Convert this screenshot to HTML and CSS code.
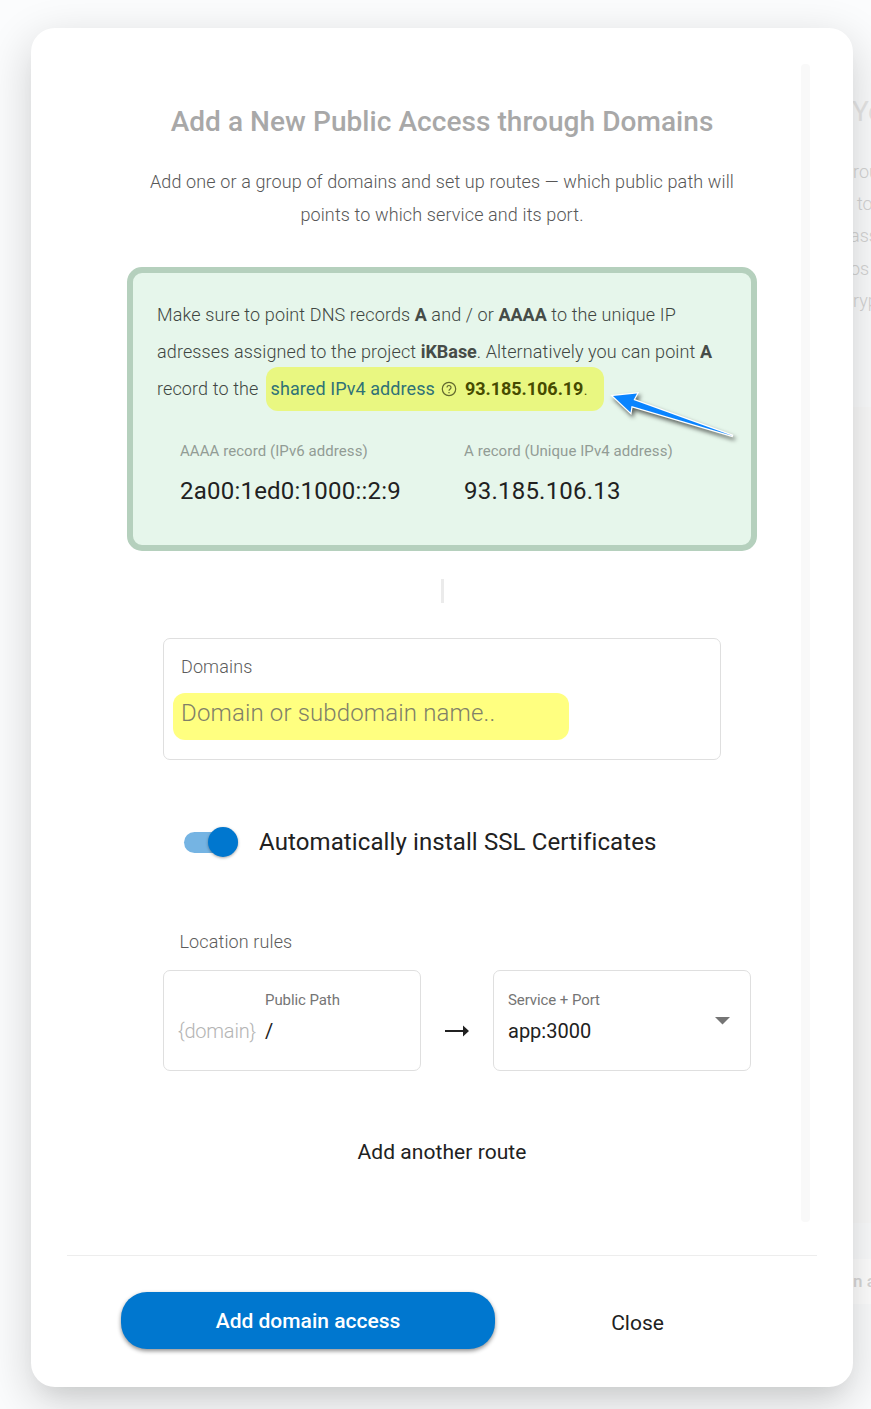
FILE: index.html
```html
<!DOCTYPE html>
<html lang="en">
<head>
<meta charset="utf-8">
<title>Public access through domains</title>
<link rel="stylesheet" href="styles.css">
</head>
<body>
<div class="page">
  <div class="behind">
    <div class="behind-card">
      <h2 class="behind-title">Yo</h2>
      <p class="behind-text"><span>rou</span><span class="in">to</span><span class="out">ass</span><span class="out">os</span><span>ryp</span></p>
    </div>
    <div class="behind-panel"></div>
    <div class="behind-button">n a</div>
  </div>

  <main class="dialog">
    <div class="scroll">
      <div class="content">
        <h1 class="title">Add a New Public Access through Domains</h1>
        <p class="intro">Add one or a group of domains and set up routes — which public path will<br>points to which service and its port.</p>

        <section class="notice">
          <p class="notice-text">
            <span class="line">Make sure to point DNS records <b>A</b> and / or <b>AAAA</b> to the unique IP</span>
            <span class="line">adresses assigned to the project <b>iKBase</b>. Alternatively you can point <b>A</b></span>
            <span class="line last">record to the <mark class="mark"><a class="link">shared IPv4 address</a><svg class="help" viewBox="0 0 16 16"><circle cx="8" cy="8" r="6.7"/><path d="M6 6.500a2 2 0 1 1 3.200 1.600C8.400 8.700 8 8.900 8 9.700M8 11v1.200"/></svg><b>93.185.106.19</b>.</mark></span>
          </p>
          <div class="records">
            <div><div class="rec-label">AAAA record (IPv6 address)</div><div class="rec-value">2a00:1ed0:1000::2:9</div></div>
            <div><div class="rec-label">A record (Unique IPv4 address)</div><div class="rec-value">93.185.106.13</div></div>
          </div>
          <svg class="pointer" viewBox="0 0 140 75"><path d="M8 20L32 17.500L28.500 24L128 60L26.500 30L25.500 36.500Z"/></svg>
        </section>

        <div class="tick"></div>

        <section class="domains">
          <div class="label">Domains</div>
          <div class="placeholder">Domain or subdomain name..</div>
        </section>

        <div class="ssl"><span class="toggle"><span class="thumb"></span></span><span class="ssl-text">Automatically install SSL Certificates</span></div>

        <div class="label rules">Location rules</div>
        <div class="route">
          <div class="field path">
            <span class="prefix">{domain}</span>
            <div><div class="small">Public Path</div><div class="value">/</div></div>
          </div>
          <svg class="arrow" viewBox="0 0 24 12"><path d="M0 5h18V0.500L24 6L18 11.500V7H0Z"/></svg>
          <div class="field service">
            <div><div class="small">Service + Port</div><div class="value">app:3000</div></div>
            <svg class="caret" viewBox="0 0 15 8"><path d="M0 0H15L7.500 7.500Z"/></svg>
          </div>
        </div>
        <div class="another">Add another route</div>
      </div>
      <div class="scrollbar"></div>
    </div>
    <footer class="footer">
      <button class="primary">Add domain access</button>
      <button class="close">Close</button>
    </footer>
  </main>
</div>
</body>
</html>
```
FILE: styles.css
```css
* { box-sizing: border-box; }
body { margin: 0; font-family: Roboto, "Liberation Sans", sans-serif; color: #212121; background: #fbfcfd; }
h1, h2, p { margin: 0; }
button { font: inherit; border: 0; padding: 0; background: none; }
.page { position: relative; width: 871px; height: 1409px; overflow: hidden; padding: 28px 18px 22px 31px; }

/* Content dimmed behind the dialog */
.behind { position: absolute; top: 0; right: 0; width: 18px; height: 1409px; overflow: hidden; white-space: nowrap; }
.behind-card { height: 407px; padding-top: 92px; }
.behind-title { font-size: 28px; line-height: 40px; font-weight: 400; color: #e6e6e6; margin-left: -1px; }
.behind-text { display: flex; flex-direction: column; padding-top: 24px; font-size: 18px; line-height: 32.2px; font-weight: 300; color: #d4d4d4; }
.behind-text .in { padding-left: 4px; }
.behind-text .out { margin-left: -3px; }
.behind-panel { height: 816px; background: #fafafa; }
.behind-button { height: 45px; margin-top: 36px; line-height: 45px; background: #fff; font-size: 17px; font-weight: 500; color: #d8d8d8; }

.dialog { position: relative; width: 822px; height: 1359px; padding: 36px; background: #fff; border-radius: 24px;
  box-shadow: 0 16px 22px -12px rgba(0,20,10,.08), 0 14px 46px 2px rgba(0,0,0,.165); }
.scroll { display: flex; height: 1191px; }
.content { width: 630px; margin-left: 60px; }
.scrollbar { width: 9px; height: 1158px; margin-left: 44px; border-radius: 4px; background: #f9f9f9; }

.title { padding-top: 38px; text-align: center; font-size: 28px; line-height: 40px; font-weight: 500; letter-spacing: .06px; color: #a8a8a8; white-space: nowrap; }
.intro { padding-top: 23px; height: 125px; text-align: center; font-size: 18px; line-height: 33px; font-weight: 300; letter-spacing: .12px; color: #575757; white-space: nowrap; }

.notice { position: relative; height: 284px; padding: 23px 24px; border: 6px solid #b5d0bd; border-radius: 15px; background: #e6f6eb; }
.notice-text { height: 145px; font-size: 18px; font-weight: 300; letter-spacing: .12px; line-height: 37px; color: #404642; white-space: nowrap; }
.notice-text b { font-weight: 700; letter-spacing: -.04px; color: #464c48; }
.line { display: block; height: 37px; }
.last { display: flex; align-items: center; }
.mark { display: flex; flex: none; align-items: center; width: 338px; height: 44px; margin-left: 7px; padding-left: 5px; border-radius: 12px; background: #e9f781; color: #464b00; }
.notice-text .mark b { color: #464b00; }
.link { color: #2f7277; font-weight: 400; letter-spacing: .08px; }
.help { width: 16px; height: 16px; margin: 0 8px 0 6px; fill: none; stroke: #62692f; stroke-width: 1.2; }
.records { display: grid; grid-template-columns: 284px auto; padding-left: 23px; white-space: nowrap; }
.rec-label { font-size: 15px; line-height: 20px; letter-spacing: .06px; color: #929c95; }
.rec-value { padding-top: 14px; font-size: 24px; line-height: 32px; letter-spacing: .22px; color: #212121; }
.pointer { position: absolute; left: 472px; top: 103px; width: 140px; height: 75px; overflow: visible; fill: #0a84ff; stroke: #fff; stroke-width: 2.5; paint-order: stroke; filter: drop-shadow(2px 3px 2px rgba(0,0,0,.6)); }

.tick { width: 3px; height: 24px; margin: 28px auto 35px; background: #ebebeb; }
.label { font-size: 18px; line-height: 24px; font-weight: 300; letter-spacing: .12px; color: #5c5c5c; }
.domains { width: 558px; height: 122px; margin-left: 36px; padding: 16px 9px; border: 1px solid #dfdfdf; border-radius: 7px; }
.domains .label { padding-left: 8px; }
.placeholder { width: 396px; height: 47px; margin-top: 14px; padding-left: 8px; border-radius: 12px; background: #ffff80; font-size: 24px; line-height: 40px; font-weight: 300; letter-spacing: .15px; color: #808068; }
.ssl { display: flex; align-items: center; height: 40px; margin: 62px 0 68px 57px; }
.toggle { width: 54px; height: 21px; border-radius: 11px; background: #75b4e3; }
.thumb { display: block; width: 30px; height: 30px; margin: -5px 0 0 24px; border-radius: 50%; background: #0077cf; box-shadow: 0 1px 3px rgba(0,0,0,.35); }
.ssl-text { margin-left: 21px; font-size: 24px; line-height: 40px; letter-spacing: .11px; white-space: nowrap; }
.rules { padding-left: 52.500px; }
.route { display: flex; align-items: center; width: 588px; margin: 16px 0 0 36px; }
.field { display: flex; width: 258px; height: 101px; padding: 19px 14px; border: 1px solid #dfdfdf; border-radius: 7px; }
.prefix { width: 87px; padding-top: 28px; font-size: 20px; line-height: 26px; font-weight: 300; letter-spacing: -.2px; color: #b4b4b4; }
.small { font-size: 15px; line-height: 20px; letter-spacing: -.08px; color: #757575; white-space: nowrap; }
.value { padding-top: 8px; font-size: 20px; line-height: 26px; }
.arrow { width: 24px; height: 12px; margin: 21px 24px 0; fill: #212121; }
.service { justify-content: space-between; }
.caret { width: 15px; height: 8px; margin: 27px 6px 0 0; fill: #757575; }
.another { padding-top: 67px; text-align: center; font-size: 21px; line-height: 28px; letter-spacing: .06px; }

.footer { display: flex; height: 132px; width: 750px; padding: 36px 0 0 54px; border-top: 1px solid #ededed; }
.primary { width: 374px; height: 57px; border-radius: 26px; background: #0077cf; color: #fff; font-size: 21px; font-weight: 500; box-shadow: 0 2px 4px rgba(0,0,0,.45); }
.close { width: 106px; height: 61px; margin-left: 89.500px; font-size: 21px; color: #212121; }
```
